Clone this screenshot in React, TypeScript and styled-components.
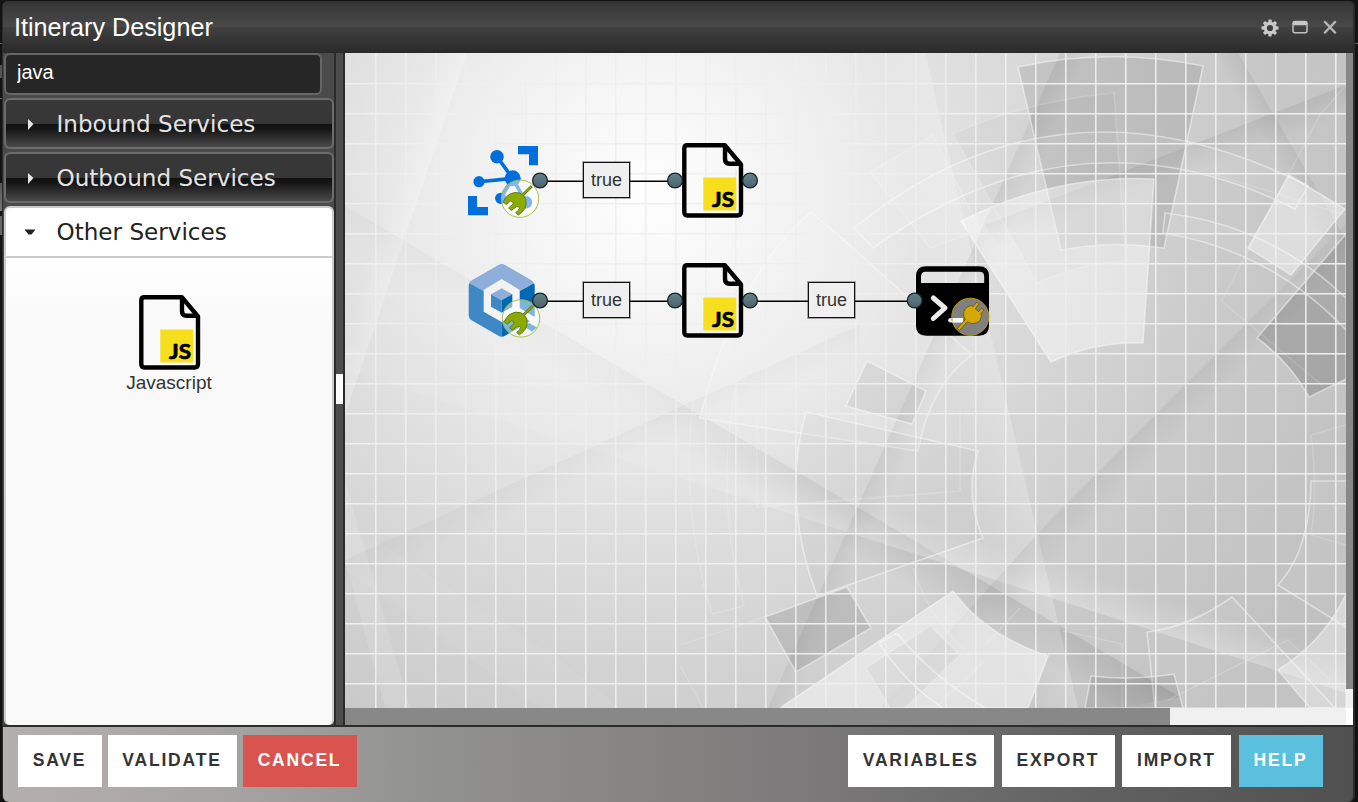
import React from "react";
import styled, { createGlobalStyle } from "styled-components";

const Global = createGlobalStyle`
  html, body { margin: 0; height: 100%; background: #151515; overflow: hidden; }
  * { box-sizing: border-box; }
  body { font-family: "Liberation Sans", Arial, sans-serif; }
`;

const Page = styled.div`
  display: flex;
  width: 1358px;
  height: 802px;
  padding: 1px 3px 0 2px;
  background:
    linear-gradient(#666, #666) 0 43px / 2px 1px no-repeat,
    linear-gradient(#555, #555) 0 65px / 2px 13px no-repeat,
    linear-gradient(#666, #666) 0 98px / 2px 1px no-repeat,
    linear-gradient(#555, #777) 0 183px / 2px 28px no-repeat,
    linear-gradient(#666, #666) 0 216px / 2px 19px no-repeat,
    linear-gradient(#666, #666) 100% 43px / 3px 1px no-repeat,
    linear-gradient(#131313, #151515 50%, #111);
`;

const Window = styled.div`
  display: flex;
  flex-direction: column;
  width: 1353px;
  height: 801px;
  padding: 0 2px 0 1px;
  border-radius: 6px;
  overflow: hidden;
  background: #2b2b2b;
`;

const TitleBar = styled.header`
  display: flex;
  flex: none;
  align-items: center;
  justify-content: space-between;
  height: 52px;
  padding: 0 14px 0 11px;
  background: linear-gradient(#303030, #383838 8%, #484848 49%, #404040 51%, #2a2a2a);
`;

const Title = styled.h1`
  margin: 0;
  color: #fff;
  font-size: 25.2px;
  font-weight: 400;
  line-height: 50px;
`;

const Tools = styled.div`
  display: flex;
  align-items: center;
  gap: 12px;
`;

const Main = styled.main`
  display: flex;
  flex: none;
  height: 672px;
  background: #4a4a4a;
`;

const Sidebar = styled.aside`
  display: flex;
  flex-direction: column;
  width: 331px;
  padding: 0 0 0 1px;
  gap: 3px;
`;

const Search = styled.input`
  width: 318px;
  height: 42px;
  flex: none;
  padding: 0 11px 3px;
  border: 2px solid #666;
  border-radius: 6px;
  outline: none;
  background: #262626;
  color: #fff;
  font: 20px "Liberation Sans", Arial, sans-serif;
`;

const Section = styled.button<{ $open?: boolean }>`
  display: flex;
  align-items: center;
  flex: none;
  width: 330px;
  height: 51px;
  padding: 0 0 0 17.5px;
  gap: 19px;
  border: 2px solid ${(p) => (p.$open ? "#ccc" : "#6c6c6c")};
  border-bottom-color: ${(p) => (p.$open ? "#fff" : "#6c6c6c")};
  border-radius: ${(p) => (p.$open ? "6px 6px 0 0" : "6px")};
  background: ${(p) =>
    p.$open ? "#fff" : "linear-gradient(#383838, #363636 50%, #111 51%, #161616 62%, #494949)"};
  color: ${(p) => (p.$open ? "#222" : "#e3e3e3")};
  font: 23.1px Verdana, "DejaVu Sans", sans-serif;
`;

const SectionBody = styled.div`
  display: flex;
  flex-direction: column;
  align-items: center;
  width: 330px;
  height: 470px;
  margin-top: -4px;
  padding-top: 37px;
  border: 2px solid #ccc;
  border-bottom-width: 0;
  border-radius: 0 0 5px 5px;
  background: linear-gradient(#fff, #f9f9f9 14%);
`;

const ServiceIcon = styled.span`
  display: flex;
  padding-left: 2px;
`;

const ServiceName = styled.span`
  margin-top: 1px;
  color: #333;
  font-size: 19px;
  line-height: 24px;
`;

const Splitter = styled.div`
  display: flex;
  align-items: center;
  width: 11px;
  border: solid #2b2b2b;
  border-width: 0 2px;
  background: #4d4d4d;
`;

const SplitGrip = styled.span`
  width: 7px;
  height: 30px;
  background: #fff;
`;

const CanvasArea = styled.section`
  display: grid;
  grid-template: 655px 17px / 1001px 7px;
  width: 1008px;
`;

const Canvas = styled.div`
  position: relative;
  overflow: hidden;
`;

const Track = styled.div`
  background: #f0f0f0;
`;

const Thumb = styled.div<{ $w: string; $h: string }>`
  width: ${(p) => p.$w};
  height: ${(p) => p.$h};
  background: #888;
`;

const Corner = styled.div`
  background: #fff;
`;

const Layer = styled.svg`
  position: absolute;
  inset: 0;
  width: 1001px;
  height: 655px;
`;

const Node = styled.div<{ $x: number; $y: number }>`
  position: absolute;
  left: ${(p) => p.$x}px;
  top: ${(p) => p.$y}px;
  display: flex;
`;

const Condition = styled(Node)`
  align-items: center;
  justify-content: center;
  width: 47px;
  height: 36px;
  border: 1px solid #111;
  outline: 1px solid rgba(0, 0, 0, 0.3);
  background: #efefef;
  color: #333;
  font-size: 18px;
`;

const Footer = styled.footer`
  display: flex;
  flex: none;
  justify-content: space-between;
  height: 77px;
  padding: 8px 30px 14px 15px;
  border-top: 2px solid #2b2d2b;
  border-radius: 0 0 6px 6px;
  background: linear-gradient(90deg, #b4afaf, #a5a4a2 17%, #939391 30%, #7b7979 60%, #626262 80%, #505050);
`;

const Group = styled.div<{ $gap: number }>`
  display: flex;
  gap: ${(p) => p.$gap}px;
`;

const Action = styled.button<{ $tone?: string; $w: number }>`
  width: ${(p) => p.$w}px;
  height: 52px;
  padding: 0 1px 2px 0;
  border: 0;
  background: ${(p) => p.$tone ?? "#fff"};
  color: ${(p) => (p.$tone ? "#fff" : "#333")};
  font: bold 17.5px "Liberation Sans", Arial, sans-serif;
  letter-spacing: 1.8px;
`;

const Arrow = ({ open }: { open?: boolean }) => (
  <svg width="14" height="14" viewBox="0 0 14 14">
    {open ? <path d="M.5 4.500h11L7.500 9.500H4.500z" fill="#222" /> : <path d="M4 2l5.500 5-5.500 6z" fill="#e6e6e6" />}
  </svg>
);

const GearIcon = () => (
  <svg width="18" height="20" viewBox="0 0 18 20">
    <g fill="#c8c8c8">
      {[0, 45, 90, 135].map((a) => (
        <rect key={a} x="7.300" y="2.500" width="3.400" height="17" rx="1" transform={`rotate(${a} 9 11)`} />
      ))}
    </g>
    <circle cx="9" cy="11" r="4.700" fill="none" stroke="#c8c8c8" strokeWidth="3.200" />
    <circle cx="9" cy="11" r="3.100" fill="#3d3d3d" />
  </svg>
);

const MaximizeIcon = () => (
  <svg width="18" height="14" viewBox="0 0 18 14">
    <rect x="2" y="1.500" width="14" height="11.300" rx="2" fill="none" stroke="#c0c0c0" strokeWidth="1.500" />
    <path d="M2 5.200V3q0-1.800 1.800-1.800h10.400Q16 1.200 16 3v2.200z" fill="#c8c8c8" />
  </svg>
);

const CloseIcon = () => (
  <svg width="18" height="14" viewBox="0 0 18 14">
    <path d="M4 2l10 10.500M14 2L4 12.500" stroke="#b4b4b4" strokeWidth="2.500" strokeLinecap="round" />
  </svg>
);

const ScriptIcon = () => (
  <svg width="62" height="75" viewBox="0 0 62 75">
    <path
      d="M5.500 2.300H43L59 21.500V69q0 3.500-3.500 3.500h-50Q2.300 72.500 2.300 69V5.500Q2.300 2.300 5.500 2.300z"
      fill="none" stroke="#000" strokeWidth="4.400" strokeLinejoin="round"
    />
    <path d="M43 4V16q0 4.700 4.500 4.700H58" fill="none" stroke="#000" strokeWidth="4.400" />
    <rect x="21.300" y="34.500" width="33" height="33" fill="#f7df1e" />
    <text x="30" y="64.300" fontFamily="Lato, sans-serif" fontWeight="700" fontSize="21" stroke="#000" strokeWidth=".7" textLength="22" lengthAdjust="spacingAndGlyphs">JS</text>
  </svg>
);

const InBadge = ({ cx, cy }: { cx: number; cy: number }) => (
  <g transform={`translate(${cx - 54} ${cy - 55.4})`}>
    <circle cx="54" cy="55.400" r="18.700" fill="#fff" fillOpacity=".5" stroke="#9dbb35" strokeWidth=".9" />
    <path d="M65.700 43L56 52.500" stroke="#5f7010" strokeWidth="3" />
    <path
      d="M37.300 58.500Q39 54 43 51.300Q48 48 53.500 49.600Q58.500 52 59.800 56Q60.800 61 59 65Q56.500 69.500 52.300 71.800L49.700 69.300Q53.500 67 53.500 64.700Q53 63 50.500 63.400L45.200 67.200L42.600 64.600L47.300 60.400Q47 57.700 44.500 57.700L40 61.300z"
      fill="#8aab00" stroke="#5f7010" strokeWidth=".9"
    />
    <path d="M65.500 43.200L55.500 53" stroke="#8aab00" strokeWidth="1.600" />
  </g>
);

const EventHubIcon = () => (
  <svg width="74" height="76" viewBox="0 0 74 76">
    <g fill="#006fdb">
      <path d="M51 3H71V22.300H62V11.300H51zM1 53H10V64H21V72.300H1z" />
      <circle cx="30" cy="13.700" r="6.800" />
      <circle cx="12" cy="38.700" r="5.600" />
      <circle cx="45.700" cy="35.300" r="8" />
      <circle cx="33.700" cy="55.300" r="5.600" />
      <circle cx="59" cy="59.300" r="6.200" />
    </g>
    <path d="M30 13.700L45.700 35.300L12 38.700M33.700 55.300L45.700 35.300L59 59.300" fill="none" stroke="#006fdb" strokeWidth="3.600" />
    <InBadge cx={53} cy={55.7} />
  </svg>
);

const CubeIcon = () => (
  <svg width="74" height="76" viewBox="0 0 74 76">
    <defs>
      <clipPath id="hexagon">
        <path d="M31 2Q34.700 0 38.500 2L64 17Q67.700 19.500 67.700 23V52Q67.700 55.500 64 57.500L38.500 72.500Q34.700 75 31 72.500L5 57.500Q1.700 55.500 1.700 52V23Q1.700 19.500 5 17z" />
      </clipPath>
    </defs>
    <g clipPath="url(#hexagon)">
      <path d="M34.700 0L69 19.300L34.700 38L1 19.300z" fill="#8eaedb" />
      <path d="M1 19.300L34.700 38V76L1 57z" fill="#3e89c5" />
      <path d="M69 19.300L34.700 38V76L69 57z" fill="#0068b4" />
    </g>
    <path d="M34.700 16L52.700 27V45L71 56L66 61L52.700 50L34.700 59L16.700 48.700V27z" fill="#f3f3f3" />
    <path d="M34.700 25.300L45.300 31.300L34.700 37.300L24 31.300z" fill="#8eaedb" />
    <path d="M24 31.300L34.700 37.300V49.700L24 43.700z" fill="#3e89c5" />
    <path d="M45.300 31.300L34.700 37.300V49.700L45.300 43.700z" fill="#0068b4" />
    <path d="M57 63.500L62 60L70 64.500L65 68.500z" fill="#0068b4" />
    <InBadge cx={54} cy={55.4} />
  </svg>
);

const ConsoleIcon = () => (
  <svg width="75" height="71" viewBox="0 0 75 71">
    <path
      fillRule="evenodd"
      d="M10 .3H63Q73 .3 73 10V60Q73 69.700 63 69.700H10Q0 69.700 0 60V10Q0 .3 10 .3zM9.500 5.700Q5 5.700 5 10.500V17H68.200V10.500Q68.200 5.700 63.700 5.700z"
    />
    <path d="M17.300 32L29 42L17.300 52.500" fill="none" stroke="#ececec" strokeWidth="5" strokeLinecap="round" strokeLinejoin="round" />
    <path d="M34.500 54.300H46" stroke="#ececec" strokeWidth="4.600" strokeLinecap="round" />
    <circle cx="54.300" cy="50.800" r="18.600" fill="#808080" stroke="#c79d08" strokeWidth=".9" />
    <path d="M36.500 54.300H47" stroke="#fff" strokeWidth="4.600" />
    <g fill="none">
      <path d="M42 63.800L52 53M57.500 42.500L62 36.800M62.500 48L67.200 42.800" stroke="#6b560b" strokeWidth="3.600" />
      <path d="M55.800 39.500L65.200 48Q66 54 61 56.800Q55.500 59 50.500 55.400Q46.500 51 47.800 45.500Q50.500 40 55.800 39.500z" fill="#d4a900" stroke="#6b560b" strokeWidth=".9" />
      <path d="M42.500 63.200L52 53M57.500 42.500L61.600 37.300M62.500 48L66.700 43.300" stroke="#d4a900" strokeWidth="2.200" />
    </g>
  </svg>
);

const gridLines = (count: number, start: number) => Array.from({ length: count }, (_, i) => start + i * 30);

// The backdrop and the wires share one coordinate space whose origin is the window's corner.
const Backdrop = () => (
  <Layer viewBox="345 53 1001 655">
    <defs>
      <radialGradient id="base" gradientUnits="userSpaceOnUse" cx="645" cy="195" r="800">
        <stop offset="0" stopColor="#fefefe" />
        <stop offset=".15" stopColor="#f5f5f5" />
        <stop offset=".28" stopColor="#ebebeb" />
        <stop offset=".4" stopColor="#e0e0e0" />
        <stop offset=".55" stopColor="#d5d5d5" />
        <stop offset=".75" stopColor="#c9c9c9" />
        <stop offset="1" stopColor="#c0c0c0" />
      </radialGradient>
      <linearGradient id="shadeDown" gradientUnits="userSpaceOnUse" x1="860" y1="507" x2="838" y2="544">
        <stop offset="0" stopColor="#000" stopOpacity=".08" />
        <stop offset="1" stopColor="#000" stopOpacity="0" />
      </linearGradient>
      <linearGradient id="reveal" gradientUnits="userSpaceOnUse" x1="345" y1="0" x2="1000" y2="0">
        <stop offset="0" stopColor="#fff" stopOpacity=".3" />
        <stop offset=".5" stopColor="#fff" stopOpacity=".4" />
        <stop offset=".85" stopColor="#fff" />
      </linearGradient>
      <mask id="fadeLeft" maskUnits="userSpaceOnUse" x="345" y="53" width="1001" height="655">
        <rect x="345" y="53" width="1001" height="655" fill="url(#reveal)" />
      </mask>
      <linearGradient id="lightUp" gradientUnits="userSpaceOnUse" x1="913" y1="554" x2="925" y2="517">
        <stop offset="0" stopColor="#fff" stopOpacity=".28" />
        <stop offset="1" stopColor="#fff" stopOpacity="0" />
      </linearGradient>
      <linearGradient id="lightLeft" gradientUnits="userSpaceOnUse" x1="1002" y1="380" x2="955" y2="391">
        <stop offset="0" stopColor="#fff" stopOpacity=".22" />
        <stop offset="1" stopColor="#fff" stopOpacity="0" />
      </linearGradient>
      <linearGradient id="ray" gradientUnits="userSpaceOnUse" x1="1165" y1="405" x2="1188" y2="427">
        <stop offset="0" stopColor="#000" stopOpacity=".05" />
        <stop offset="1" stopColor="#000" stopOpacity="0" />
      </linearGradient>
      <linearGradient id="ray2" gradientUnits="userSpaceOnUse" x1="1274" y1="115" x2="1255" y2="126">
        <stop offset="0" stopColor="#000" stopOpacity=".055" />
        <stop offset="1" stopColor="#000" stopOpacity="0" />
      </linearGradient>
      <linearGradient id="ray3" gradientUnits="userSpaceOnUse" x1="1200" y1="142" x2="1210" y2="168">
        <stop offset="0" stopColor="#000" stopOpacity=".065" />
        <stop offset="1" stopColor="#000" stopOpacity="0" />
      </linearGradient>
      <linearGradient id="ray4" gradientUnits="userSpaceOnUse" x1="858" y1="507" x2="880" y2="517">
        <stop offset="0" stopColor="#000" stopOpacity=".055" />
        <stop offset="1" stopColor="#000" stopOpacity="0" />
      </linearGradient>
      <linearGradient id="ray5" gradientUnits="userSpaceOnUse" x1="640" y1="425" x2="652" y2="451">
        <stop offset="0" stopColor="#000" stopOpacity=".03" />
        <stop offset="1" stopColor="#000" stopOpacity="0" />
      </linearGradient>
      <linearGradient id="leftRay" gradientUnits="userSpaceOnUse" x1="411" y1="220" x2="384" y2="211">
        <stop offset="0" stopColor="#fff" stopOpacity=".25" />
        <stop offset="1" stopColor="#fff" stopOpacity="0" />
      </linearGradient>
    </defs>
    <rect x="345" y="53" width="1001" height="655" fill="url(#base)" />

    <path d="M925 53L1078 708H1020L860 53z" fill="url(#lightLeft)" />
    <path d="M467 53L345 415V300L427 53z" fill="url(#leftRay)" />
    <g mask="url(#fadeLeft)">
      <path d="M345 206L1180 697L1120 708L345 270z" fill="url(#shadeDown)" />
      <path d="M345 370L1346 693V645L345 320z" fill="url(#lightUp)" />
    </g>
    <path d="M1346 224L1050 520L880 708H940L1346 290z" fill="url(#ray)" />
    <path d="M1238 53L1346 240H1300L1195 53z" fill="url(#ray2)" />
    <path d="M1346 85L985 225L1010 260L1346 125z" fill="url(#ray3)" />
    <path d="M1060 53L768 708H820L1100 53z" fill="url(#ray4)" />
    <path d="M345 560L860 325V360L345 600z" fill="url(#ray5)" />
    <path d="M345 520L560 660L620 708H540L345 570z" fill="#fff" fillOpacity=".05" />
    <path d="M345 480L410 708H385L345 560z" fill="#fff" fillOpacity=".12" />

    <g stroke="#fff" strokeOpacity=".45" strokeWidth="1.600" fill="none">
      <path d="M811 212Q734 278 700 418L918 451Q930 385 972 355L845 241z" fill="#fff" fillOpacity=".1" strokeOpacity=".38" />
      <path d="M806 412L978 451Q964 495 983 538L817 596Q781 500 806 412z" fill="#000" fillOpacity=".025" />
      <path d="M867 361L926 391L912 424L846 406z" fill="#000" fillOpacity=".06" />
      <path d="M765 617L847 587L871 628L796 672z" fill="#000" fillOpacity=".1" />
      <path d="M1018 67Q1110 47 1203 66L1164 248Q1112 240 1061 250z" fill="#000" fillOpacity=".09" />
      <path d="M953 134Q1030 100 1114 93L1126 261Q1080 263 1037 283z" fill="#000" fillOpacity=".025" strokeOpacity=".16" />
      <path d="M854 228Q1060 60 1308 186L1295 209Q1078 100 873 248z" fill="#fff" fillOpacity=".07" />
      <path d="M961 221Q1055 174 1154 179L1143 343Q1095 341 1051 362z" fill="#fff" fillOpacity=".43" />
      <path d="M1289 175L1345 209L1291 275L1248 248z" fill="#fff" fillOpacity=".4" />
      <path d="M1346 234L1257 338Q1290 362 1309 397L1346 379z" fill="#000" fillOpacity=".15" />
      <path d="M1346 298Q1270 225 1165 213L1163 233Q1270 250 1346 330" fill="#fff" fillOpacity=".06" />
      <path d="M1213 174L1346 215M1222 300L1320 115L1346 85M1220 300L1322 385" strokeOpacity=".15" />
      <path d="M870 172L933 135L980 230L930 248z" strokeOpacity=".2" fill="#fff" fillOpacity=".1" />
      <path d="M693 400Q680 510 712 614L744 606Q715 500 735 390M757 415V507L960 491V410" strokeOpacity=".2" />
      <path d="M953 591Q985 635 1048 656L1028 708H780z" fill="#fff" fillOpacity=".48" />
      <path d="M930 626L960 655L905 708H890L866 668zM985 660L935 708" strokeOpacity=".18" fill="#000" fillOpacity=".035" />
      <path d="M897 633Q930 675 985 708M879 643Q905 683 943 708M897 633L879 643" />
      <path d="M680 645L765 617M680 665L703 708M913 568Q930 620 965 650M1020 608L985 645M1063 631L1122 644V708" strokeOpacity=".16" />
      <path d="M1147 632Q1190 627 1232 597L1335 708H1155z" fill="#fff" fillOpacity=".05" />
      <path d="M1091 676Q1132 681 1174 674L1183 708H1085z" fill="#000" fillOpacity=".09" />
      <path d="M1346 481H1311Q1310 550 1278 585L1346 627" fill="#fff" fillOpacity=".06" />
      <path d="M1311 435L1346 425M1311 435Q1318 490 1311 535L1346 545M1168 700L1288 640L1330 680" strokeOpacity=".16" />
      <path d="M1346 594Q1325 640 1278 670L1310 708H1346z" fill="#fff" fillOpacity=".35" />
    </g>

    <path
      d={gridLines(33, 375.8).map((x) => `M${x} 53V708`).join("") + gridLines(21, 83.8).map((y) => `M345 ${y}H1346`).join("")}
      stroke="#efefef" strokeWidth="1.500"
    />
  </Layer>
);

const ports: [number, number][] = [
  [540, 180.5], [675, 180.5], [750, 180.5],
  [540, 300.5], [675, 300.5], [750, 300.5], [914.7, 300.5],
];

const Wires = () => (
  <Layer viewBox="345 53 1001 655">
    <path d="M540 181.200H675M540 301.200H675M750 301.200H915" stroke="#000" strokeWidth="1.400" />
  </Layer>
);

const Ports = () => (
  <Layer viewBox="345 53 1001 655">
    <defs>
      <linearGradient id="port" x2="0" y2="1">
        <stop stopColor="#64828c" />
        <stop offset="1" stopColor="#4a646c" />
      </linearGradient>
    </defs>
    {ports.map(([x, y]) => (
      <circle key={`${x}-${y}`} cx={x} cy={y} r="7.400" fill="url(#port)" stroke="#1c2427" strokeWidth="1.300" />
    ))}
  </Layer>
);

export default function App() {
  return (
    <Page>
      <Global />
      <Window>
        <TitleBar>
          <Title>Itinerary Designer</Title>
          <Tools>
            <GearIcon />
            <MaximizeIcon />
            <CloseIcon />
          </Tools>
        </TitleBar>
        <Main>
          <Sidebar>
            <Search defaultValue="java" />
            <Section><Arrow />Inbound Services</Section>
            <Section><Arrow />Outbound Services</Section>
            <Section $open><Arrow open />Other Services</Section>
            <SectionBody>
              <ServiceIcon><ScriptIcon /></ServiceIcon>
              <ServiceName>Javascript</ServiceName>
            </SectionBody>
          </Sidebar>
          <Splitter><SplitGrip /></Splitter>
          <CanvasArea>
            <Canvas>
              <Backdrop />
              <Wires />
              <Node $x={122} $y={90}><EventHubIcon /></Node>
              <Node $x={122} $y={210}><CubeIcon /></Node>
              <Node $x={337} $y={90}><ScriptIcon /></Node>
              <Node $x={337} $y={210}><ScriptIcon /></Node>
              <Node $x={571} $y={213}><ConsoleIcon /></Node>
              <Condition $x={238} $y={109}>true</Condition>
              <Condition $x={238} $y={229}>true</Condition>
              <Condition $x={463} $y={229}>true</Condition>
              <Ports />
            </Canvas>
            <Track><Thumb $w="7px" $h="636px" /></Track>
            <Track><Thumb $w="825px" $h="17px" /></Track>
            <Corner />
          </CanvasArea>
        </Main>
        <Footer>
          <Group $gap={6}>
            <Action $w={84}>SAVE</Action>
            <Action $w={129}>VALIDATE</Action>
            <Action $w={114} $tone="#d9534f">CANCEL</Action>
          </Group>
          <Group $gap={7.6}>
            <Action $w={146}>VARIABLES</Action>
            <Action $w={113}>EXPORT</Action>
            <Action $w={109}>IMPORT</Action>
            <Action $w={84} $tone="#5bc0de">HELP</Action>
          </Group>
        </Footer>
      </Window>
    </Page>
  );
}
